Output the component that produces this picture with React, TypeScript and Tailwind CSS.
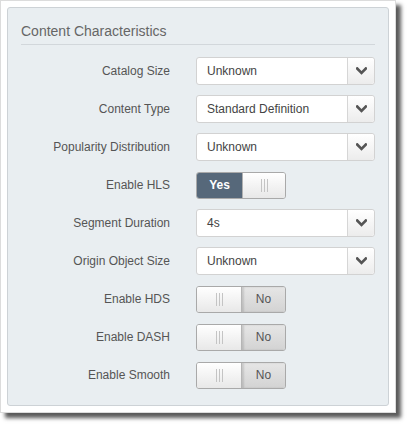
import React from 'react'

const font = { fontFamily: '"Liberation Sans", Arial, sans-serif' }

function Chevron() {
  return <svg width="11" height="8" viewBox="0 0 11 8">
    <path d="M1.2 1.5 L5.5 5.8 L9.8 1.5" fill="none" stroke="#555" strokeWidth="2.6" strokeLinecap="square" />
  </svg>
}

function Select(props: { value: string }) {
  return <div className="flex h-[28px] w-[179px] rounded-[3px] border border-[#d2d2d2] bg-white">
    <div className="flex flex-1 items-center pl-[10px] text-[12px] text-[#444]">{props.value}</div>
    <div className="flex w-[27px] items-center justify-center border-l border-[#d6d6d6] bg-gradient-to-b from-white to-[#ececec] rounded-r-[3px]">
      <Chevron />
    </div>
  </div>
}

function Grip() {
  return <div className="flex gap-[2px]">
    <div className="h-[13px] w-px bg-[#c4c4c4]" />
    <div className="h-[13px] w-px bg-[#c4c4c4]" />
    <div className="h-[13px] w-px bg-[#c4c4c4]" />
  </div>
}

function Toggle(props: { on: boolean }) {
  return <div className="flex h-[27px] w-[90px] overflow-hidden rounded-[3px] border border-[#a9a9a9]">
    {props.on ? <>
      <div className="flex w-[45px] items-center justify-center bg-[#56687a] text-[12px] font-bold text-white">Yes</div>
      <div className="flex flex-1 items-center justify-center border-l border-[#b0b0b0] bg-gradient-to-b from-white to-[#e8e8e8]"><Grip /></div>
    </> : <>
      <div className="flex w-[45px] items-center justify-center border-r border-[#b5b5b5] bg-gradient-to-b from-white to-[#e8e8e8]"><Grip /></div>
      <div className="flex flex-1 items-center justify-center bg-gradient-to-b from-[#e6e6e6] to-[#d3d3d3] text-[12px] text-[#555] shadow-[inset_2px_0_2px_rgba(0,0,0,0.12)]">No</div>
    </>}
  </div>
}

const rows: { label: string, kind: 'select' | 'toggle', value?: string, on?: boolean }[] = [
  { label: 'Catalog Size', kind: 'select', value: 'Unknown' },
  { label: 'Content Type', kind: 'select', value: 'Standard Definition' },
  { label: 'Popularity Distribution', kind: 'select', value: 'Unknown' },
  { label: 'Enable HLS', kind: 'toggle', on: true },
  { label: 'Segment Duration', kind: 'select', value: '4s' },
  { label: 'Origin Object Size', kind: 'select', value: 'Unknown' },
  { label: 'Enable HDS', kind: 'toggle', on: false },
  { label: 'Enable DASH', kind: 'toggle', on: false },
  { label: 'Enable Smooth', kind: 'toggle', on: false }
]

export default function App() {
  return <div className="h-[425px] w-[407px] bg-white" style={font}>
    <div className="h-[413px] w-[396px] border border-[#dcdcdc] bg-white p-[6px] shadow-[5px_5px_4px_rgba(0,0,0,0.65)]">
      <div className="h-full rounded-[3px] border border-[#cdd2d6] bg-[#e9eef1] px-[13px] pt-[15px]">
        <div className="border-b border-[#d2d7db] pb-[5px] text-[14px] leading-[16px] text-[#666]">Content Characteristics</div>
        <div className="mt-[12px] flex flex-col gap-[10px]">
          {rows.map(r => <div key={r.label} className="flex h-[28px] items-center">
            <div className="w-[149px] text-right text-[12px] text-[#555]">{r.label}</div>
            <div className="ml-[26px]">
              {r.kind === 'select' ? <Select value={r.value!} /> : <Toggle on={!!r.on} />}
            </div>
          </div>)}
        </div>
      </div>
    </div>
  </div>
}
